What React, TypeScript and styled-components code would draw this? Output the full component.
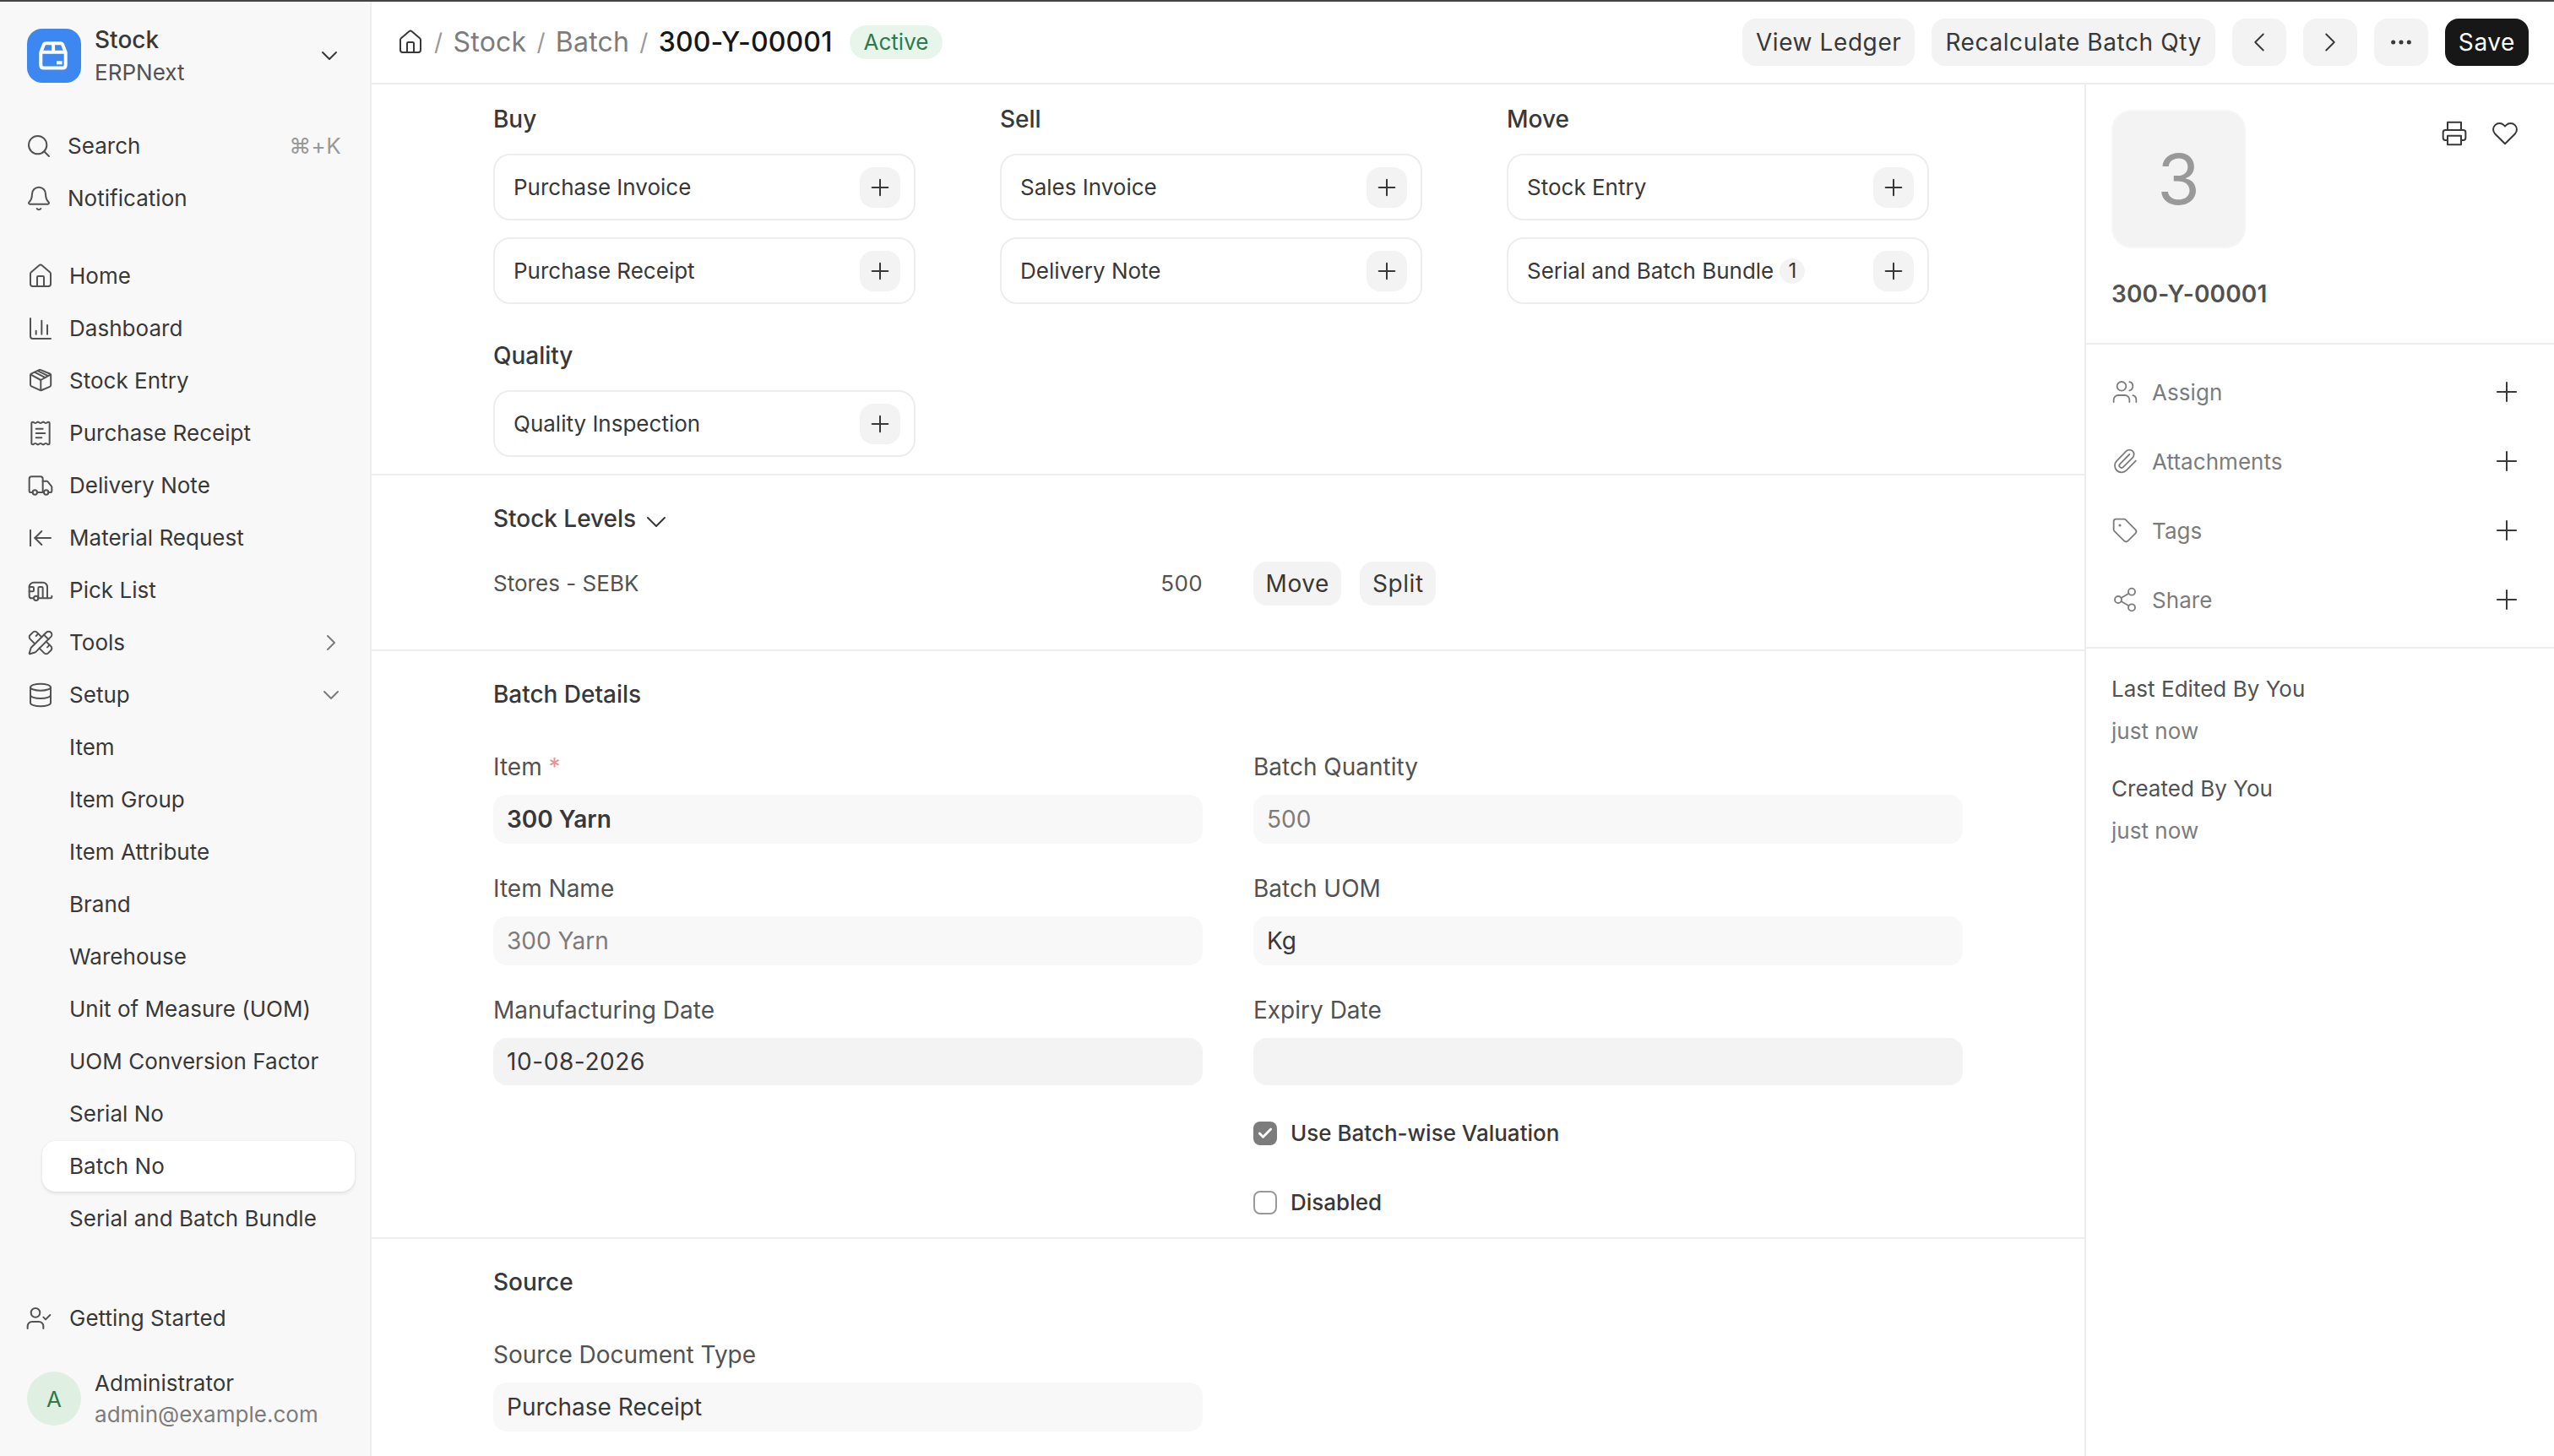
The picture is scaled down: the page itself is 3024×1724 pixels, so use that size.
import React from "react";
import styled, { createGlobalStyle, css } from "styled-components";
import {
  House, ChartColumn, ReceiptText, Truck, ArrowLeftToLine, Caravan, PencilRuler,
  Database, UserCheck, Users, Paperclip, Tag, Share2, Plus, ChevronDown,
  ChevronRight, ChevronLeft, Search, Bell, Ellipsis, Check,
} from "lucide-react";

const GlobalStyle = createGlobalStyle`
  *, *::before, *::after { box-sizing: border-box; }
  body {
    margin: 0;
    background: #fff;
    font-family: Inter, "Liberation Sans", sans-serif;
    font-size: 26px;
    letter-spacing: 0.001em;
    color: #383838;
    overflow: hidden;
  }
`;

const line = "#ededed";

const Shell = styled.div`
  display: grid;
  grid-template-columns: 440px 1fr;
  width: 3024px;
  height: 1724px;
  border-top: 2px solid #444;
  overflow: hidden;
`;

const Sidebar = styled.aside`
  display: flex;
  flex-direction: column;
  background: #f8f8f8;
  border-right: 2px solid ${line};
`;

const AppSwitcher = styled.div`
  display: flex;
  align-items: center;
  margin-top: 32px;
  height: 64px;
  padding: 0 32px 0 32px;
  gap: 16px;
`;

const Logo = styled.div`
  display: flex;
  width: 64px;
  height: 64px;
  border-radius: 18px;
  background: #3d87f0;
`;

const Stack = styled.div`
  flex: 1;
  display: flex;
  flex-direction: column;
`;

const NameLine = styled.div<{ $strong?: boolean }>`
  line-height: ${(p) => (p.$strong ? 38 : 37)}px;
  font-size: ${(p) => (p.$strong ? 28 : 26)}px;
  font-weight: ${(p) => (p.$strong ? 500 : 400)};
`;

const SubLine = styled.div<{ $muted?: boolean }>`
  line-height: ${(p) => (p.$muted ? 37 : 39)}px;
  color: ${(p) => (p.$muted ? "#7c7c7c" : "#525252")};
`;

const NavGroup = styled.nav<{ $top: number }>`
  display: flex;
  flex-direction: column;
  gap: 2px;
  margin-top: ${(p) => p.$top}px;
  line-height: 32px;
`;

const NavRow = styled.a<{ $gap?: number; $left?: number }>`
  display: flex;
  align-items: center;
  height: 60px;
  padding: 0 30px 0 ${(p) => p.$left ?? 32}px;
  gap: ${(p) => p.$gap ?? 18}px;
  svg { color: #525252; flex: none; }
  span { flex: 1; white-space: nowrap; }
`;

const SubRow = styled.a<{ $active?: boolean }>`
  display: flex;
  align-items: center;
  height: 60px;
  margin: 0 18px 0 50px;
  padding-left: 32px;
  border-radius: 16px;
  white-space: nowrap;
  ${(p) => p.$active && css`
    background: #fff;
    box-shadow: 0 2px 4px rgba(0, 0, 0, 0.1), 0 0 2px rgba(0, 0, 0, 0.06);
  `}
`;

const Shortcut = styled.kbd`
  margin-right: 4px;
  font: inherit;
  letter-spacing: 0.015em;
  color: #999;
`;

const Account = styled.div`
  display: flex;
  align-items: center;
  height: 76px;
  margin-top: 27px;
  padding-left: 32px;
  gap: 16px;
`;

const UserAvatar = styled.div`
  display: grid;
  place-items: center;
  width: 64px;
  height: 64px;
  border-radius: 50%;
  background: #dff0e2;
  color: #307a4a;
`;

const Page = styled.div`
  display: flex;
  flex-direction: column;
  min-width: 0;
`;

const Topbar = styled.header`
  display: flex;
  align-items: center;
  justify-content: space-between;
  height: 98px;
  padding: 0 30px;
  border-bottom: 2px solid ${line};
`;

const Crumbs = styled.div`
  display: flex;
  align-items: center;
  font-size: 32px;
  letter-spacing: 0.007em;
  color: #7c7c7c;
  svg { color: #383838; }
`;

const Crumb = styled.span<{ $current?: boolean }>`
  padding-bottom: 2px;
  white-space: nowrap;
  ${(p) => p.$current && css`
    color: #171717;
    font-weight: 500;
    letter-spacing: 0.004em;
  `}
`;

const Slash = styled.span`
  width: 34.5px;
  text-align: center;
  font-size: 28px;
  color: #999;
`;

const StatusPill = styled.span`
  margin-left: 20px;
  padding: 0 17px;
  line-height: 40px;
  border-radius: 20px;
  font-size: 26px;
  letter-spacing: 0;
  color: #307a4a;
  background: #e8f5ea;
`;

const Actions = styled.div`
  display: flex;
  gap: 20px;
`;

const Button = styled.button<{ $dark?: boolean; $square?: boolean; $small?: boolean }>`
  display: inline-flex;
  align-items: center;
  justify-content: center;
  height: ${(p) => (p.$small ? 52 : 56)}px;
  ${(p) => (p.$square ? "width: 64px; padding: 0;" : `padding: 0 ${p.$small ? 14.5 : 16}px;`)}
  border: 0;
  border-radius: 16px;
  font: inherit;
  font-size: 28px;
  letter-spacing: 0.021em;
  white-space: nowrap;
  color: ${(p) => (p.$dark ? "#fff" : "#383838")};
  background: ${(p) => (p.$dark ? "#171717" : "#f3f3f3")};
`;

const Body = styled.div`
  flex: 1;
  display: grid;
  grid-template-columns: 1fr 556px;
  min-height: 0;
`;

const Form = styled.main`
  min-width: 0;
`;

const Section = styled.section<{ $h: number; $pad: number }>`
  height: ${(p) => p.$h}px;
  padding: ${(p) => p.$pad}px 144px 0;
  border-bottom: 2px solid ${line};
`;

const Heading = styled.h3`
  display: flex;
  align-items: center;
  gap: 4px;
  margin: 0;
  height: 40px;
  font-size: 28px;
  line-height: 40px;
  font-weight: 500;
  letter-spacing: -0.001em;
  svg { margin-top: 8px; }
`;

const LinkGrid = styled.div`
  display: grid;
  grid-template-columns: repeat(3, 500px);
  column-gap: 100px;
  row-gap: 41px;
`;

const LinkGroup = styled.div`
  display: flex;
  flex-direction: column;
`;

const LinkCard = styled.div`
  display: flex;
  align-items: center;
  height: 79px;
  margin-bottom: 20px;
  padding: 0 16px 0 22px;
  border: 2px solid ${line};
  border-radius: 20px;
  letter-spacing: 0;
  ${Heading} + & { margin-top: 21px; }
  &:last-child { margin-bottom: 0; }
`;

const Count = styled.span`
  margin-left: 7px;
  width: 30px;
  line-height: 30px;
  border-radius: 15px;
  text-align: center;
  font-size: 24px;
  background: #f3f3f3;
`;

const AddButton = styled.button`
  display: grid;
  place-items: center;
  width: 48px;
  height: 48px;
  margin-left: auto;
  padding: 0;
  border: 0;
  border-radius: 16px;
  color: #383838;
  background: #f3f3f3;
`;

const Columns = styled.div<{ $top: number }>`
  display: grid;
  grid-template-columns: 840px 840px;
  column-gap: 60px;
  margin-top: ${(p) => p.$top}px;
`;

const StockLine = styled.div`
  display: flex;
  align-items: center;
  justify-content: space-between;
  line-height: 32px;
  color: #525252;
`;

const Quantity = styled.span`
  letter-spacing: 0.015em;
`;

const StockActions = styled.div`
  display: flex;
  gap: 22px;
`;

const Column = styled.div`
  display: flex;
  flex-direction: column;
`;

const Field = styled.div<{ $h?: number }>`
  display: flex;
  flex-direction: column;
  height: ${(p) => p.$h ?? 144}px;
`;

const Label = styled.label`
  font-size: 28px;
  letter-spacing: 0;
  line-height: 41px;
  margin-bottom: 12px;
  color: #525252;
  i { font-style: normal; color: #e79191; }
`;

const Control = styled.div<{ $tone?: "bold" | "muted"; $editable?: boolean }>`
  display: flex;
  align-items: center;
  height: ${(p) => (p.$editable ? 56 : 58)}px;
  padding: 0 16px;
  border-radius: 16px;
  font-size: 28px;
  letter-spacing: ${(p) => (p.$editable ? 0.021 : 0)}em;
  background: ${(p) => (p.$editable ? "#f3f3f3" : "#f8f8f8")};
  color: ${(p) => (p.$tone === "muted" ? "#7c7c7c" : "#383838")};
  font-weight: ${(p) => (p.$tone === "bold" ? 600 : 400)};
`;

const CheckRow = styled.label`
  display: flex;
  align-items: center;
  gap: 16px;
  height: 82px;
  line-height: 32px;
  font-weight: 500;
  letter-spacing: 0;
`;

const Box = styled.span<{ $on?: boolean }>`
  display: grid;
  place-items: center;
  width: 28px;
  height: 28px;
  border-radius: 8px;
  color: #fff;
  ${(p) => (p.$on ? "background: #7c7c7c;" : "border: 2px solid #999;")}
`;

const Side = styled.aside`
  display: flex;
  flex-direction: column;
  border-left: 2px solid ${line};
`;

const SideTop = styled.div`
  height: 308px;
  padding: 30px 42px 0 30px;
  border-bottom: 2px solid ${line};
`;

const SideTopRow = styled.div`
  display: flex;
  justify-content: space-between;
`;

const Cover = styled.div`
  display: grid;
  place-items: center;
  width: 159px;
  height: 164px;
  border: 2px solid #f6f6f6;
  border-radius: 24px;
  background: #f3f3f3;
  font-size: 82px;
  letter-spacing: 0;
  color: #999;
`;

const SideIcons = styled.div`
  display: flex;
  gap: 28px;
  padding-top: 12px;
`;

const DocName = styled.div`
  margin-top: 34px;
  font-size: 28px;
  line-height: 40px;
  font-weight: 600;
  letter-spacing: 0.006em;
  color: #525252;
`;

const SideList = styled.div`
  height: 360px;
  padding: 15px 37px 0 30px;
  border-bottom: 2px solid ${line};
`;

const SideRow = styled.div`
  display: flex;
  align-items: center;
  height: 82px;
  gap: 16px;
  color: #7c7c7c;
  letter-spacing: 0.002em;
  svg:last-child { margin-left: auto; color: #383838; }
`;

const History = styled.div`
  padding: 29px 30px 0;
`;

const Who = styled.div`
  line-height: 38px;
  color: #525252;
`;

const When = styled.div`
  margin: 12px 0 30px;
  line-height: 38px;
  color: #7c7c7c;
`;

const ic = { size: 32, strokeWidth: 1.5 };
const thin = { size: 32, strokeWidth: 1.35 };

function BoxIcon() {
  return (
    <svg width="32" height="32" viewBox="0 0 32 32" fill="none" stroke="currentColor" strokeWidth="2" strokeLinecap="round" strokeLinejoin="round">
      <path d="M14.2 3.1Q15.3 2.6 16.4 3.1L27 7.5Q28.2 8.1 28.2 9.3V21Q28.2 22.2 27 22.8L17.3 27Q16.2 27.4 15.1 26.9L5.2 22.3Q4 21.7 4 20.5V9.2Q4 8 5.2 7.4Z" />
      <path d="M4.6 8.6 16.3 15 27.7 8.6M16.3 15V27M9.3 5.9 21.6 12.2M12.6 4.2 25 10.2" />
    </svg>
  );
}

function PrinterIcon() {
  return (
    <svg width="32" height="32" viewBox="0 0 24 24" fill="none" stroke="currentColor" strokeWidth="1.5" strokeLinecap="round" strokeLinejoin="round">
      <path d="M6 9V2H18V9" />
      <path d="M6 18H4a2 2 0 0 1-2-2v-5a2 2 0 0 1 2-2h16a2 2 0 0 1 2 2v5a2 2 0 0 1-2 2h-2" />
      <path d="M6 14H18V22H6Z" />
    </svg>
  );
}

function HeartIcon() {
  return (
    <svg width="32" height="32" viewBox="0 0 24 24" fill="none" stroke="currentColor" strokeWidth="1.5" strokeLinecap="round" strokeLinejoin="round">
      <path d="M20.84 4.61a5.5 5.5 0 0 0-7.78 0L12 5.67l-1.06-1.06a5.5 5.5 0 0 0-7.78 7.78l1.06 1.06L12 21.23l7.78-7.78 1.06-1.06a5.5 5.5 0 0 0 0-7.78z" />
    </svg>
  );
}

const nav = [
  { icon: House, label: "Home" },
  { icon: ChartColumn, label: "Dashboard" },
  { icon: BoxIcon, label: "Stock Entry" },
  { icon: ReceiptText, label: "Purchase Receipt" },
  { icon: Truck, label: "Delivery Note" },
  { icon: ArrowLeftToLine, label: "Material Request" },
  { icon: Caravan, label: "Pick List" },
  { icon: PencilRuler, label: "Tools", end: ChevronRight },
  { icon: Database, label: "Setup", end: ChevronDown },
];

const setup = [
  "Item", "Item Group", "Item Attribute", "Brand", "Warehouse", "Unit of Measure (UOM)",
  "UOM Conversion Factor", "Serial No", "Batch No", "Serial and Batch Bundle",
];

const links: { title: string; items: [string, number?][] }[] = [
  { title: "Buy", items: [["Purchase Invoice"], ["Purchase Receipt"]] },
  { title: "Sell", items: [["Sales Invoice"], ["Delivery Note"]] },
  { title: "Move", items: [["Stock Entry"], ["Serial and Batch Bundle", 1]] },
  { title: "Quality", items: [["Quality Inspection"]] },
];

const sideRows = [
  { icon: Users, label: "Assign" },
  { icon: Paperclip, label: "Attachments" },
  { icon: Tag, label: "Tags" },
  { icon: Share2, label: "Share" },
];

function StockLogo() {
  return (
    <svg width="64" height="64" viewBox="0 0 64 64" fill="none" stroke="#fff" strokeWidth="4" strokeLinejoin="round">
      <path d="M16.3 28 20 18.5Q20.8 17.2 22.5 17.2H39.5Q41.2 17.2 42 18.5L45.7 28V43Q45.7 46.5 42.2 46.5H19.8Q16.3 46.5 16.3 43Z" />
      <path d="M16.3 27.7H45.7M31.1 17V28" />
      <path d="M35 40.3H41.6" />
    </svg>
  );
}

function RowChevron({ icon: Icon }: { icon: typeof ChevronDown }) {
  return <Icon size={32} strokeWidth={1.5} opacity={0.75} />;
}

export default function App() {
  return (
    <>
      <GlobalStyle />
      <Shell>
        <Sidebar>
          <AppSwitcher>
            <Logo><StockLogo /></Logo>
            <Stack>
              <NameLine $strong>Stock</NameLine>
              <SubLine>ERPNext</SubLine>
            </Stack>
            <ChevronDown size={32} strokeWidth={1.5} />
          </AppSwitcher>
          <NavGroup $top={45}>
            <NavRow $left={30} $gap={18}><Search {...ic} /><span>Search</span><Shortcut>⌘+K</Shortcut></NavRow>
            <NavRow $left={30} $gap={18}><Bell {...ic} /><span>Notification</span></NavRow>
          </NavGroup>
          <NavGroup $top={32}>
            {nav.map(({ icon: Icon, label, end }) => (
              <NavRow key={label}><Icon {...ic} /><span>{label}</span>{end && <RowChevron icon={end} />}</NavRow>
            ))}
            {setup.map((s) => <SubRow key={s} $active={s === "Batch No"}>{s}</SubRow>)}
          </NavGroup>
          <NavGroup $top={58}>
            <NavRow $left={30} $gap={20}><UserCheck {...ic} /><span>Getting Started</span></NavRow>
          </NavGroup>
          <Account>
            <UserAvatar>A</UserAvatar>
            <Stack>
              <NameLine>Administrator</NameLine>
              <SubLine $muted>admin@example.com</SubLine>
            </Stack>
          </Account>
        </Sidebar>

        <Page>
          <Topbar>
            <Crumbs>
              <House {...ic} />
              <Slash>/</Slash><Crumb>Stock</Crumb>
              <Slash>/</Slash><Crumb>Batch</Crumb>
              <Slash>/</Slash><Crumb $current>300-Y-00001</Crumb>
              <StatusPill>Active</StatusPill>
            </Crumbs>
            <Actions>
              <Button>View Ledger</Button>
              <Button>Recalculate Batch Qty</Button>
              <Button $square><ChevronLeft size={38} strokeWidth={1.2} /></Button>
              <Button $square><ChevronRight size={38} strokeWidth={1.2} /></Button>
              <Button $square><Ellipsis size={32} strokeWidth={1.8} /></Button>
              <Button $dark>Save</Button>
            </Actions>
          </Topbar>

          <Body>
            <Form>
              <Section $h={463} $pad={21}>
                <LinkGrid>
                  {links.map((g) => (
                    <LinkGroup key={g.title}>
                      <Heading>{g.title}</Heading>
                      {g.items.map(([name, count]) => (
                        <LinkCard key={name}>
                          {name}
                          {count && <Count>{count}</Count>}
                          <AddButton><Plus {...ic} /></AddButton>
                        </LinkCard>
                      ))}
                    </LinkGroup>
                  ))}
                </LinkGrid>
              </Section>

              <Section $h={208} $pad={31}>
                <Heading>Stock Levels <ChevronDown size={40} strokeWidth={1.2} /></Heading>
                <Columns $top={31}>
                  <StockLine><span>Stores - SEBK</span><Quantity>500</Quantity></StockLine>
                  <StockActions><Button $small>Move</Button><Button $small>Split</Button></StockActions>
                </Columns>
              </Section>

              <Section $h={696} $pad={31}>
                <Heading>Batch Details</Heading>
                <Columns $top={46}>
                  <Column>
                    <Field><Label>Item <i>*</i></Label><Control $tone="bold">300 Yarn</Control></Field>
                    <Field><Label>Item Name</Label><Control $tone="muted">300 Yarn</Control></Field>
                    <Field><Label>Manufacturing Date</Label><Control $editable>10-08-2026</Control></Field>
                  </Column>
                  <Column>
                    <Field><Label>Batch Quantity</Label><Control $tone="muted">500</Control></Field>
                    <Field><Label>Batch UOM</Label><Control>Kg</Control></Field>
                    <Field $h={125}><Label>Expiry Date</Label><Control $editable /></Field>
                    <CheckRow><Box $on><Check size={20} strokeWidth={3.4} /></Box>Use Batch-wise Valuation</CheckRow>
                    <CheckRow><Box />Disabled</CheckRow>
                  </Column>
                </Columns>
              </Section>

              <Section $h={400} $pad={31}>
                <Heading>Source</Heading>
                <Columns $top={46}>
                  <Field><Label>Source Document Type</Label><Control>Purchase Receipt</Control></Field>
                </Columns>
              </Section>
            </Form>

            <Side>
              <SideTop>
                <SideTopRow>
                  <Cover>3</Cover>
                  <SideIcons><PrinterIcon /><HeartIcon /></SideIcons>
                </SideTopRow>
                <DocName>300-Y-00001</DocName>
              </SideTop>
              <SideList>
                {sideRows.map(({ icon: Icon, label }) => (
                  <SideRow key={label}><Icon {...thin} /><span>{label}</span><Plus size={38} strokeWidth={1.25} /></SideRow>
                ))}
              </SideList>
              <History>
                <Who>Last Edited By You</Who>
                <When>just now</When>
                <Who>Created By You</Who>
                <When>just now</When>
              </History>
            </Side>
          </Body>
        </Page>
      </Shell>
    </>
  );
}
